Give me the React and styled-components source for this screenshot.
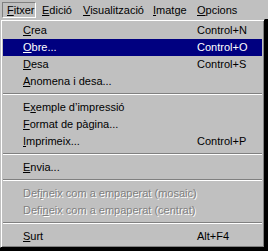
import React from 'react';
import styled, { createGlobalStyle } from 'styled-components';

const Global = createGlobalStyle`
    html, body { margin:0; padding:0; }
    body {
        background:#000;
        font-family:"Liberation Sans", Arial, sans-serif;
        font-size:11px;
    }
`;

const Screen = styled.div`
    width:268px;
    height:251px;
    background:#000;
    overflow:hidden;
`;

const MenuBar = styled.div`
    display:flex;
    height:19px;
    padding-left:2px;
    background:#c0c0c0;
    box-sizing:border-box;
`;

const BarItem = styled.div`
    width:${({ $width }) => $width}px;
    height:16px;
    margin-top:2px;
    box-sizing:border-box;
    padding-left:${({ $open }) => ($open ? 4 : 6)}px;
    line-height:${({ $open }) => ($open ? 15 : 16)}px;
    border:${({ $open }) => ($open ? '1px solid' : 'none')};
    border-color:#808080 #fff #fff #808080;
    color:#000;
    white-space:nowrap;
`;

const Key = styled.span`
    text-decoration:underline;
    text-underline-offset:1px;
`;

const Dropdown = styled.div`
    width:265px;
    background:#c0c0c0;
    box-sizing:border-box;
    border:1px solid;
    border-color:#c0c0c0 #000 #000 #c0c0c0;
    box-shadow:inset 1px 1px 0 #fff, inset -1px -1px 0 #808080;
    display:flex;
    flex-direction:column;
    padding:2px;
`;

const Item = styled.div`
    display:grid;
    grid-template-columns:174px 1fr;
    height:17px;
    line-height:17px;
    padding-left:20px;
    white-space:nowrap;
    background:${({ $active }) => ($active ? '#000080' : 'transparent')};
    color:${({ $active, $disabled }) => ($active ? '#fff' : $disabled ? '#808080' : '#000')};
    text-shadow:${({ $disabled }) => ($disabled ? '1px 1px 0 #fff' : 'none')};
`;

const Shortcut = styled.span``;

const Separator = styled.div`
    height:9px;
    box-sizing:border-box;
    padding-top:3px;
    &::after {
        content:'';
        display:block;
        height:1px;
        background:#808080;
        border-bottom:1px solid #fff;
    }
`;

const bar = [
    { pre: '', key: 'F', post: 'itxer', width: 34, open: true },
    { pre: '', key: 'E', post: 'dició', width: 41 },
    { pre: '', key: 'V', post: 'isualització', width: 70 },
    { pre: '', key: 'I', post: 'matge', width: 44 },
    { pre: '', key: 'O', post: 'pcions', width: 47 },
];

const items = [
    { pre: '', key: 'C', post: 'rea', sc: 'Control+N' },
    { pre: '', key: 'O', post: 'bre...', sc: 'Control+O', active: true },
    { pre: '', key: 'D', post: 'esa', sc: 'Control+S' },
    { pre: '', key: 'A', post: 'nomena i desa...' },
    'sep',
    { pre: 'E', key: 'x', post: 'emple d\u2019impressió' },
    { pre: '', key: 'F', post: 'ormat de pàgina...' },
    { pre: '', key: 'I', post: 'mprimeix...', sc: 'Control+P' },
    'sep',
    { pre: '', key: 'E', post: 'nvia...' },
    'sep',
    { pre: 'Def', key: 'i', post: 'neix com a empaperat (mosaic)', disabled: true },
    { pre: 'Defi', key: 'n', post: 'eix com a empaperat (centrat)', disabled: true },
    'sep',
    { pre: '', key: 'S', post: 'urt', sc: 'Alt+F4' },
];

const Label = ({ pre, k, post }) => <span>{pre}<Key>{k}</Key>{post}</span>;

export default function App() {
    return <>
        <Global />
        <Screen>
            <MenuBar>
                {bar.map((b, i) => <BarItem key={i} $width={b.width} $open={b.open}>
                    <Label pre={b.pre} k={b.key} post={b.post} />
                </BarItem>)}
            </MenuBar>
            <Dropdown>
                {items.map((it, i) => it === 'sep'
                    ? <Separator key={i} />
                    : <Item key={i} $active={it.active} $disabled={it.disabled}>
                        <Label pre={it.pre} k={it.key} post={it.post} />
                        <Shortcut>{it.sc}</Shortcut>
                    </Item>)}
            </Dropdown>
        </Screen>
    </>;
}
